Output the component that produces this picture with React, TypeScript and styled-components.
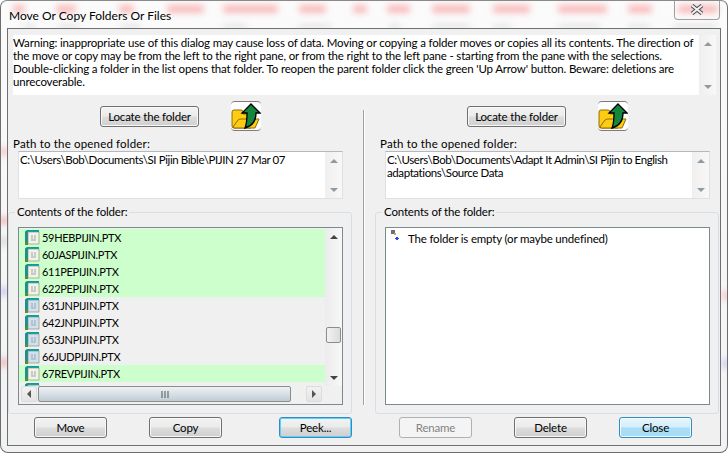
import React from "react";
import styled, { createGlobalStyle } from "styled-components";

const GlobalStyle = createGlobalStyle`
  html, body {
    margin: 0;
    padding: 0;
    width: 728px;
    height: 453px;
    overflow: hidden;
    background: #fff;
  }
  * {
    box-sizing: border-box;
  }
`;

const Frame = styled.div`
  position: relative;
  width: 728px;
  height: 453px;
  padding: 0 6px 6px;
  display: flex;
  flex-direction: column;
  overflow: hidden;
  background: linear-gradient(180deg, #fbfbfb 0%, #f1f2f3 100%);
  border: 1px solid #6d6d6d;
  border-top: 1px solid #8a8a8a;
  border-radius: 7px 7px 8px 8px;
  font-family: Lato, "Noto Sans", sans-serif;
  font-size: 11.5px;
  letter-spacing: -0.17px;
  color: #000;
`;

const Blob = styled.span<{ $x: number; $y: number; $w: number; $h: number; $c: string }>`
  position: absolute;
  left: ${(p) => p.$x}px;
  top: ${(p) => p.$y}px;
  width: ${(p) => p.$w}px;
  height: ${(p) => p.$h}px;
  background: ${(p) => p.$c};
  filter: blur(3px);
  border-radius: 3px;
`;

const TitleBar = styled.div`
  position: relative;
  height: 27px;
  display: flex;
  align-items: center;
  padding: 2px 0 0 2px;
  font-size: 12px;
  letter-spacing: 0;
`;

const CloseCaption = styled.div`
  position: absolute;
  top: -1px;
  right: 1px;
  width: 46px;
  height: 20px;
  display: flex;
  align-items: center;
  justify-content: center;
  border: 1px solid #a0a0a0;
  border-top: none;
  border-radius: 0 0 4px 4px;
`;

const Client = styled.div`
  position: relative;
  flex: 1;
  display: flex;
  flex-direction: column;
  background: #f0f0f0;
  border: 1px solid #6f6f6f;
  padding-top: 6px;
`;

const Warning = styled.div`
  height: 60px;
  margin: 0 4px 0 5px;
  display: flex;
  background: #fff;
`;

const WarningText = styled.div`
  flex: 1;
  line-height: 13px;
  white-space: nowrap;
  padding-top: 1px;
`;

const Panes = styled.div`
  flex: 1;
  display: grid;
  grid-template-columns: 355px 2px 1fr;
`;

const Divider = styled.div`
  margin: 15px 0 40px;
  border-left: 1px solid #a0a0a0;
  border-right: 1px solid #fff;
`;

const Pane = styled.section<{ $inset: number }>`
  padding-left: ${(p) => p.$inset}px;
  display: flex;
  flex-direction: column;
`;

const LocateRow = styled.div`
  height: 30px;
  margin-top: 6px;
  padding-left: 92px;
  display: flex;
  align-items: center;
  gap: 32px;
`;

const Button = styled.button<{ $variant?: "default" | "focus" | "primary"; $before?: number }>`
  width: 73px;
  height: 21px;
  flex: none;
  margin-left: ${(p) => p.$before ?? 0}px;
  padding: 0;
  font: inherit;
  letter-spacing: inherit;
  color: #000;
  border: 1px solid ${(p) => (p.$variant && p.$variant !== "default" ? "#2f8fc4" : "#707070")};
  border-radius: 3px;
  box-shadow: inset 0 0 0 1px ${(p) => (p.$variant === "focus" ? "#5fd0f5" : "#f8f8f8")};
  background: ${(p) =>
    p.$variant === "primary"
      ? "linear-gradient(180deg, #e8f6fd 0%, #d3eefb 48%, #aadef7 52%, #a8dcf5 100%)"
      : "linear-gradient(180deg, #f3f3f3 0%, #ebebeb 48%, #dddddd 52%, #cfcfcf 100%)"};

  &:disabled {
    color: #838383;
    background: #f4f4f4;
    border-color: #adb2b5;
    box-shadow: none;
  }
`;

const LocateButton = styled(Button)`
  width: 99px;
`;

const UpFolder = styled.button`
  width: 30px;
  height: 30px;
  padding: 0;
  display: flex;
  align-items: center;
  justify-content: center;
  background: #fff;
  border: none;
  border-top: 1px solid #7c7c7c;
  border-bottom: 1px solid #7c7c7c;
  border-radius: 4px;
`;

const PathLabel = styled.div`
  margin: 6px 0 0 5px;
  height: 14px;
  line-height: 14px;
  letter-spacing: 0.17px;
`;

const PathBox = styled.div`
  width: 325px;
  height: 48px;
  margin-left: 10px;
  display: flex;
  background: #fff;
  border: 1px solid #dbe1e6;
  border-top-color: #b5b9bf;
`;

const PathText = styled.div`
  flex: 1;
  padding-top: 1px;
  margin-left: 1px;
  line-height: 13px;
  letter-spacing: -0.4px;
  white-space: nowrap;
`;

const Group = styled.fieldset`
  width: 344px;
  margin: 6px 0 0;
  min-width: 0;
  padding: 8px 9px 8px;
  border: 1px solid #d5dfe5;
  border-radius: 3px;
`;

const Legend = styled.legend`
  margin-left: -3px;
  padding: 0 2px;
  height: 14px;
  line-height: 14px;
`;

const ListFrame = styled.div`
  width: 325px;
  height: 178px;
  display: grid;
  grid-template-columns: 306px 17px;
  grid-template-rows: 158px 18px;
  border: 1px solid #7b8a8a;
  background: #f0f0f0;
`;

const Rows = styled.ul`
  grid-column: 1;
  grid-row: 1;
  margin: 0;
  padding: 1px 0 0;
  list-style: none;
  overflow: hidden;
`;

const Row = styled.li<{ $green: boolean }>`
  height: 17px;
  padding-left: 6px;
  display: flex;
  align-items: center;
  gap: 2px;
  font-size: 11px;
  letter-spacing: -0.3px;
  line-height: 17px;
  background: ${(p) => (p.$green ? "#ccffcc" : "#f0f0f0")};
`;

const VBar = styled.div`
  grid-column: 2;
  grid-row: 1;
  display: flex;
  flex-direction: column;
  align-items: center;
  background: linear-gradient(90deg, #ececec, #f7f7f7);
`;

const ScrollButton = styled.div`
  height: 17px;
  flex: none;
  display: flex;
  align-items: center;
  justify-content: center;
`;

const VTrackGap = styled.div<{ $h: number }>`
  height: ${(p) => p.$h}px;
  flex: none;
`;

const VThumb = styled.div`
  width: 15px;
  height: 16px;
  flex: none;
  border: 1px solid #8c8c8c;
  border-radius: 2px;
  background: linear-gradient(90deg, #f2f2f2, #dcdcdc);
`;

const HBar = styled.div`
  grid-column: 1;
  grid-row: 2;
  display: flex;
  align-items: stretch;
  background: #f0f0f0;
  padding: 0 3px 2px 2px;
`;

const HButton = styled.div`
  width: 16px;
  flex: none;
  display: flex;
  align-items: center;
  justify-content: center;
  border: 1px solid #dcdcdc;
  border-radius: 2px;
  background: linear-gradient(180deg, #f2f2f2, #e4e4e4);
`;

const HThumb = styled.div`
  width: 253px;
  flex: none;
  margin-left: 1px;
  display: flex;
  align-items: center;
  justify-content: center;
  border: 1px solid #8c8c8c;
  border-radius: 2px;
  background: linear-gradient(180deg, #edf1f4 0%, #d8e0e6 50%, #bfcbd3 100%);
`;

const HSpacer = styled.div`
  flex: 1;
`;

const EmptyList = styled.div`
  width: 325px;
  height: 178px;
  display: flex;
  align-items: flex-start;
  gap: 9px;
  padding: 2px 0 0 5px;
  background: #fff;
  border: 1px solid #7b8a8a;
  line-height: 17px;
`;

const ButtonRow = styled.div<{ $pad: number }>`
  display: flex;
  margin: 3px 0 0;
  padding-left: ${(p) => p.$pad}px;
`;

const ArrowIcon: React.FC<{ dir: "up" | "down" | "left" | "right"; color?: string }> = ({ dir, color = "#555" }) => {
  const points = {
    up: "0,5 4,1 8,5",
    down: "0,1 8,1 4,5",
    left: "5,0 5,8 1,4",
    right: "1,0 1,8 5,4",
  }[dir];
  const vertical = dir === "up" || dir === "down";
  return (
    <svg width={vertical ? 8 : 6} height={vertical ? 6 : 8} viewBox={vertical ? "0 0 8 6" : "0 0 6 8"}>
      <polygon points={points} fill={color} />
    </svg>
  );
};

const LightScroll = styled.div`
  width: 17px;
  flex: none;
  display: flex;
  flex-direction: column;
  justify-content: space-between;
  background: linear-gradient(90deg, #efefef, #f8f8f8);
`;

const SmallArrows: React.FC = () => (
  <LightScroll>
    <ScrollButton>
      <ArrowIcon dir="up" color="#8f9aa3" />
    </ScrollButton>
    <ScrollButton>
      <ArrowIcon dir="down" color="#8f9aa3" />
    </ScrollButton>
  </LightScroll>
);

const FolderUpIcon: React.FC = () => (
  <svg width="30" height="28" viewBox="0 0 30 28">
    <path
      d="M1 10 Q1 8 3 8 H10 Q12 8 12 10 V12 H20 V26 H3 Q1 26 1 24 Z"
      fill="#ffcc11"
      stroke="#8a6a10"
      strokeWidth="1"
    />
    <path d="M2 25 L7 18 Q8 17 10 17 H21 L28 17 L24 26 H3 Z" fill="#ffcc11" stroke="#8a6a10" strokeWidth="1" />
    <path
      d="M20 2 L29 11 H25 C25 18 22 24 14 26 C16 21 16 17 16 11 H11 Z"
      fill="#14873c"
      stroke="#000"
      strokeWidth="1.3"
      strokeLinejoin="miter"
    />
  </svg>
);

const BookIcon: React.FC<{ page: string }> = ({ page }) => (
  <svg width="15" height="15" viewBox="0 0 15 15">
    <path d="M0 1.5 L2 0 H14 V13 H3 L0 15 Z" fill="#1c8f8f" />
    <path d="M0 12 L3 12 V15 H0 Z" fill="#5c8a2e" />
    <rect x="3" y="2" width="11" height="12" fill={page} stroke="#7d8a5c" strokeWidth="0.6" />
    <rect x="3" y="0.5" width="11" height="1.5" fill="#17a2a2" />
    <path d="M6 6 H8 M9 6 H11 M6 8 H8 M9 8 H11 M6 10 H11" stroke="#9aa5a8" strokeWidth="1" />
  </svg>
);

const EmptyIcon: React.FC = () => (
  <svg width="8" height="11" viewBox="0 0 8 11">
    <rect x="0" y="0" width="4" height="4" fill="#6f6f6f" />
    <rect x="3" y="3" width="2" height="2" fill="#a8a8a8" />
    <rect x="5" y="7" width="2" height="3" fill="#3344ee" />
    <rect x="4" y="8" width="4" height="1" fill="#3344ee" />
  </svg>
);

const CloseGlyph: React.FC = () => (
  <svg width="14" height="11" viewBox="0 0 14 11">
    <path d="M2 1.5 L12 9.5 M12 1.5 L2 9.5" stroke="#4a4f55" strokeWidth="4" />
    <path d="M2 1.5 L12 9.5 M12 1.5 L2 9.5" stroke="#f0f2f4" strokeWidth="2" />
  </svg>
);

const TOP_WORDS: [number, number][] = [
  [12, 12], [55, 20], [118, 15], [166, 37], [222, 55], [298, 27], [352, 14],
  [386, 23], [431, 38], [492, 37], [557, 49], [627, 24], [677, 40],
];
const LOW_WORDS: [number, number][] = [
  [22, 12], [57, 21], [120, 20], [222, 24], [297, 33], [388, 12], [431, 38], [492, 18], [557, 42], [627, 22], [672, 44],
];
const SIDE_MARKS: [number, number, number, string][] = [
  [0, 146, 6, "#f7b5b5"], [0, 215, 6, "#f5a0a0"], [0, 236, 6, "#d0d0d0"], [0, 286, 6, "#b9b9f0"], [0, 357, 6, "#f4a0a0"],
  [722, 290, 5, "#f4b0b0"], [722, 358, 5, "#b9b9f0"],
];

const files: { name: string; green: boolean }[] = [
  { name: "59HEBPIJIN.PTX", green: true },
  { name: "60JASPIJIN.PTX", green: true },
  { name: "611PEPIJIN.PTX", green: true },
  { name: "622PEPIJIN.PTX", green: true },
  { name: "631JNPIJIN.PTX", green: false },
  { name: "642JNPIJIN.PTX", green: false },
  { name: "653JNPIJIN.PTX", green: false },
  { name: "66JUDPIJIN.PTX", green: false },
  { name: "67REVPIJIN.PTX", green: true },
  { name: "", green: false },
];

const App: React.FC = () => (
  <>
    <GlobalStyle />
    <Frame>
      {TOP_WORDS.map(([x, w]) => (
        <Blob key={x} $x={x} $y={4} $w={w} $h={8} $c="#f9bcbc" />
      ))}
      {LOW_WORDS.map(([x, w]) => (
        <Blob key={x} $x={x} $y={24} $w={w} $h={3} $c="#d9d9d9" />
      ))}
      {SIDE_MARKS.map(([x, y, w, c]) => (
        <Blob key={y} $x={x} $y={y} $w={w} $h={9} $c={c} />
      ))}
      <TitleBar>
        Move Or Copy Folders Or Files
        <CloseCaption>
          <CloseGlyph />
        </CloseCaption>
      </TitleBar>
      <Client>
        <Warning>
          <WarningText>
            Warning: inappropriate use of this dialog may cause loss of data. Moving or copying a folder moves or copies all its contents. The direction of
            <br />
            the move or copy may be from the left to the right pane, or from the right to the left pane - starting from the pane with the selections.
            <br />
            Double-clicking a folder in the list opens that folder. To reopen the parent folder click the green 'Up Arrow' button. Beware: deletions are
            <br />
            unrecoverable.
          </WarningText>
          <SmallArrows />
        </Warning>
        <Panes>
          <Pane $inset={0}>
            <LocateRow>
              <LocateButton>Locate the folder</LocateButton>
              <UpFolder aria-label="Up Arrow">
                <FolderUpIcon />
              </UpFolder>
            </LocateRow>
            <PathLabel>Path to the opened folder:</PathLabel>
            <PathBox>
              <PathText>C:\Users\Bob\Documents\SI Pijin Bible\PIJIN 27 Mar 07</PathText>
              <SmallArrows />
            </PathBox>
            <Group>
              <Legend>Contents of the folder:</Legend>
              <ListFrame>
                <Rows>
                  {files.map((f, i) => (
                    <Row key={i} $green={f.green}>
                      <BookIcon page={f.green ? "#f2f2ea" : "#cfe0f2"} />
                      {f.name}
                    </Row>
                  ))}
                </Rows>
                <VBar>
                  <ScrollButton>
                    <ArrowIcon dir="up" color="#444" />
                  </ScrollButton>
                  <VTrackGap $h={82} />
                  <VThumb />
                  <VTrackGap $h={26} />
                  <ScrollButton>
                    <ArrowIcon dir="down" color="#444" />
                  </ScrollButton>
                </VBar>
                <HBar>
                  <HButton>
                    <ArrowIcon dir="left" />
                  </HButton>
                  <HThumb>
                    <svg width="8" height="7" viewBox="0 0 8 7">
                      <path d="M1 0 V7 M4 0 V7 M7 0 V7" stroke="#555" strokeWidth="1" />
                    </svg>
                  </HThumb>
                  <HSpacer />
                  <HButton>
                    <ArrowIcon dir="right" />
                  </HButton>
                </HBar>
              </ListFrame>
            </Group>
            <ButtonRow $pad={26}>
              <Button>Move</Button>
              <Button $before={42}>Copy</Button>
              <Button $before={57} $variant="focus">
                Peek...
              </Button>
            </ButtonRow>
          </Pane>
          <Divider />
          <Pane $inset={10}>
            <LocateRow>
              <LocateButton>Locate the folder</LocateButton>
              <UpFolder aria-label="Up Arrow">
                <FolderUpIcon />
              </UpFolder>
            </LocateRow>
            <PathLabel>Path to the opened folder:</PathLabel>
            <PathBox>
              <PathText>
                C:\Users\Bob\Documents\Adapt It Admin\SI Pijin to English
                <br />
                adaptations\Source Data
              </PathText>
              <SmallArrows />
            </PathBox>
            <Group>
              <Legend>Contents of the folder:</Legend>
              <EmptyList>
                <EmptyIcon />
                The folder is empty (or maybe undefined)
              </EmptyList>
            </Group>
            <ButtonRow $pad={24}>
              <Button disabled>Rename</Button>
              <Button $before={42}>Delete</Button>
              <Button $before={32} $variant="primary">
                Close
              </Button>
            </ButtonRow>
          </Pane>
        </Panes>
      </Client>
    </Frame>
  </>
);

export default App;
